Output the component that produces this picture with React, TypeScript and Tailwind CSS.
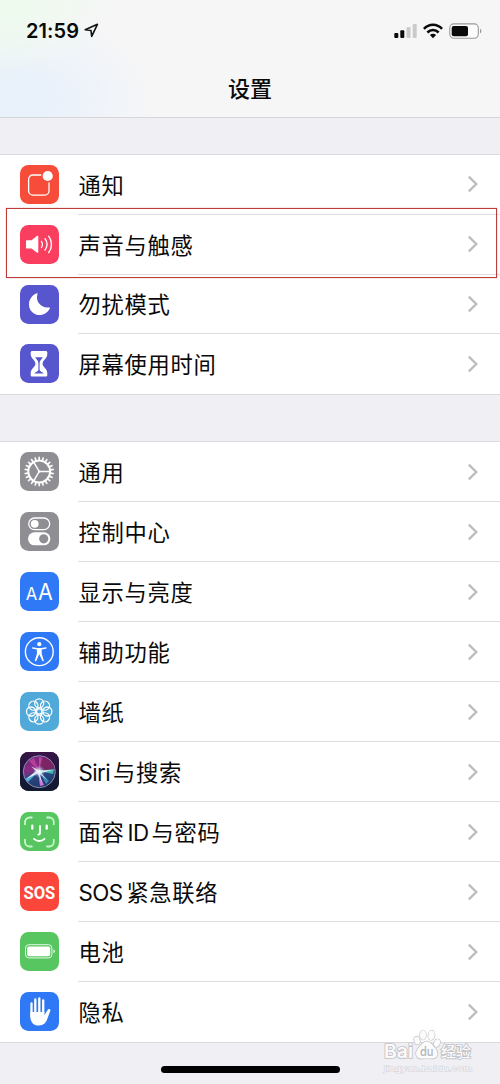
import React from 'react';

interface SettingItem {
    icon: React.ReactNode;
    bg: string;
    // Latin and CJK parts are kept apart because they use different tracking
    label: { text: string; className: string }[];
}

const CJK = 'tracking-[0.7px]';

const NotificationIcon = () => (
    <g fill="none" stroke="#fff" strokeWidth="1.3" strokeLinecap="round">
        <path d="M20.8 10H13a4.4 4.4 0 0 0-4.4 4.4v11.4a4.4 4.4 0 0 0 4.4 4.4h11.6a4.4 4.4 0 0 0 4.4-4.4V18" />
        <circle cx="27.7" cy="11" r="5.1" fill="#fff" stroke="none" />
    </g>
);

const SoundIcon = () => (
    <g fill="none" stroke="#fff" strokeWidth="1.4" strokeLinecap="round">
        <path d="M7 15.2h4.6l5.2-4.1c.8-.6 1.5-.2 1.5.7v15.1c0 .9-.7 1.3-1.5.7l-5.2-4.2H7c-.7 0-1-.4-1-1v-6.2c0-.6.3-1 1-1z" fill="#fff" stroke="none" />
        <path d="M21.4 16.3a5.5 5.5 0 0 1 0 6.2" strokeWidth="1.2" />
        <path d="M25 13.7a9.6 9.6 0 0 1 0 11.4" />
        <path d="M28.7 11.2a13.6 13.6 0 0 1 0 16.4" />
    </g>
);

const MoonIcon = () => (
    <path d="M17.6 8.8C14.9 15.7 20.6 23.7 29.4 22.4c.5-.1.8.3.5.8C27.7 27.6 24 30 19.7 30 13.7 30 9 25.3 9 19.4c0-4.8 3-9.2 7.8-11.1.6-.2 1 .0.8.5z" fill="#fff" />
);

const HourglassIcon = () => (
    <g>
        <path d="M12.3 7h13.4c1 0 1.6.6 1.6 1.5v1.6c0 4.7-4.7 6.3-4.7 9.6s4.7 4.9 4.7 9.6v1.6c0 1-.6 1.600-1.6 1.6H12.3c-1 0-1.6-.6-1.6-1.6v-1.6c0-4.7 4.7-6.3 4.7-9.600s-4.7-4.9-4.7-9.6V8.500c0-.9.6-1.500 1.600-1.500z" fill="#fff" />
        <path d="M15.200 13.300h7.600c-.7 1.800-3.200 3.200-3.200 5.600v6.500c0 2.400 3.200 2.100 4 4.200h-9.200c.8-2.100 4-1.800 4-4.200v-6.500c0-2.400-2.500-3.800-3.200-5.600z" fill="#5856cf" />
    </g>
);

const GearIcon = () => (
    <g fill="none" stroke="#fff" transform="translate(19.2 19.5)">
        {Array.from({ length: 22 }, (_, i) => (
            <path key={i} d="M-.9-11.5L-.6-14.7H.6L.9-11.5z" fill="#fff" strokeWidth=".2" transform={`rotate(${(i * 360) / 22})`} />
        ))}
        <circle r="10.9" strokeWidth="1.9" />
        <circle r="1.3" fill="#fff" stroke="none" />
        <path d="M0 0H10.5M0 0L-5.3-9.2M0 0L-5.3 9.2" strokeWidth="1.500" />
    </g>
);

const ToggleIcon = () => (
    <g>
        <rect x="8.7" y="6" width="21" height="11.6" rx="5.8" fill="none" stroke="#fff" strokeWidth="1.3" />
        <circle cx="14.7" cy="11.8" r="3.9" fill="#fff" />
        <rect x="8" y="20.3" width="22.4" height="13" rx="6.5" fill="#fff" />
        <circle cx="23.7" cy="26.8" r="4.6" fill="#8e8e93" />
    </g>
);

const TextSizeIcon = () => (
    <g fill="#fff" fontFamily="Inter, sans-serif" fontWeight="400">
        <text x="5.700" y="27.800" fontSize="17.500" textLength="11.500" lengthAdjust="spacingAndGlyphs">A</text>
        <text x="18" y="27.800" fontSize="22.500" textLength="14.800" lengthAdjust="spacingAndGlyphs">A</text>
    </g>
);

const AccessibilityIcon = () => (
    <g>
        <circle cx="19.3" cy="19.7" r="13.9" fill="none" stroke="#fff" strokeWidth="1.4" />
        <circle cx="19.3" cy="12.2" r="2.1" fill="#fff" />
        <path d="M12.800 15.300l4.300.7h4.400l4.300-.7c1-.1 1.200 1.200.2 1.400l-4.300.9v4.100l2 6.600c.3 1-1 1.400-1.400.5l-3-6.500-3 6.500c-.4.9-1.700.5-1.400-.5l2-6.600v-4.100l-4.300-.9c-1-.2-.8-1.500.2-1.400z" fill="#fff" />
    </g>
);

const WallpaperIcon = () => (
    <g fill="none" stroke="#fff" strokeWidth="1.3" transform="translate(19.2 19.5)">
        {Array.from({ length: 8 }, (_, i) => (
            <circle key={i} cx="0" cy="-8.2" r="4.5" transform={`rotate(${i * 45})`} />
        ))}
        <circle r="2.7" />
    </g>
);

const SiriIcon = () => (
    <g>
        <defs>
            <linearGradient id="siriBg" x1="0" y1="0" x2="0" y2="1">
                <stop offset="0" stopColor="#3a1548" />
                <stop offset=".5" stopColor="#181737" />
                <stop offset="1" stopColor="#101a30" />
            </linearGradient>
            <linearGradient id="siriOrb" x1=".3" y1="0" x2=".6" y2="1">
                <stop offset="0" stopColor="#7a2380" />
                <stop offset=".4" stopColor="#8a2c83" />
                <stop offset=".62" stopColor="#2b4683" />
                <stop offset="1" stopColor="#1c3a63" />
            </linearGradient>
            <radialGradient id="siriGlow">
                <stop offset="0" stopColor="#fff" />
                <stop offset=".35" stopColor="#e6f4ff" stopOpacity=".7" />
                <stop offset="1" stopColor="#a8dcff" stopOpacity="0" />
            </radialGradient>
        </defs>
        <rect width="39" height="39" fill="url(#siriBg)" />
        <circle cx="19.3" cy="19.7" r="16" fill="url(#siriOrb)" stroke="#8d8bb5" strokeWidth="1" />
        <path d="M20 19l3-14c7 2 11 7 12 12z" fill="#7b245c" opacity=".8" />
        <path d="M19 19L9 9l5-3z" fill="#d84fa8" opacity=".6" />
        <path d="M19 19L19 5l3 1z" fill="#e0609f" opacity=".6" />
        <path d="M19 19L5 27l3 3z" fill="#58b9dc" opacity=".9" />
        <path d="M19 19l15-2-1 5z" fill="#45cbb8" opacity=".85" />
        <path d="M18 20l2 14 4-1z" fill="#c973dc" />
        <path d="M19 19l10 10-3 3z" fill="#3f9bc4" opacity=".8" />
        <path d="M6 27l10-8-5-5 8 4.500 14-.5-12 3 6 7-7-6 2 10-4-10.500z" fill="#fff" opacity=".8" />
        <circle cx="19" cy="19.5" r="6" fill="url(#siriGlow)" />
    </g>
);

const FaceIdIcon = () => (
    <g fill="none" stroke="#fff" strokeWidth="1.8" strokeLinecap="round">
        <g stroke="#c9f5cd">
            <path d="M5 12.3V10a4.5 4.5 0 0 1 4.5-4.5h2.3" />
            <path d="M27 5.5h2.3a4.5 4.5 0 0 1 4.5 4.5v2.3" />
            <path d="M5 27.7V30a4.5 4.5 0 0 0 4.5 4.5h2.3" />
            <path d="M27 34.5h2.3a4.5 4.5 0 0 0 4.5-4.5v-2.3" />
        </g>
        <path d="M12.3 13.7v3M26.7 13.7v3" strokeWidth="2.3" />
        <path d="M20 14v7c0 1.1-.6 1.6-1.8 1.6" />
        <path d="M14 26.8c3 2.9 7.5 2.9 10.5 0" />
    </g>
);

const SosIcon = () => (
    <text x="3.500" y="26.500" fill="#fff" fontFamily="Roboto, sans-serif" fontWeight="700" fontSize="19" textLength="31.800" lengthAdjust="spacingAndGlyphs">SOS</text>
);

const BatteryIcon = () => (
    <g>
        <rect x="5.5" y="12.7" width="26.4" height="13.2" rx="3.4" fill="none" stroke="#e3f9e5" strokeWidth="1" />
        <rect x="7.2" y="14.4" width="23" height="9.8" rx="1.8" fill="#fff" />
        <path d="M33.5 17.3c1.8.6 1.8 3.4 0 4z" fill="#fff" />
    </g>
);

const HandIcon = () => (
    <g fill="none" stroke="#fff" strokeWidth="2.3" strokeLinecap="round">
        <path d="M11.5 11.500v13M15.300 7.500v14M19.300 6.500v14M23.200 8.500v13" />
        <path d="M10.350 20h14v3.200l3.300-5.300c.9-1.500 3.200-.8 2.700.8l-3.200 8.600c-1.400 3.900-4 6.200-8.200 6.200-5.500 0-8.600-3.500-8.600-8.800z" fill="#fff" stroke="none" />
    </g>
);

const cjk = (text: string) => [{ text, className: CJK }];

const firstGroup: SettingItem[] = [
    { icon: <NotificationIcon />, bg: 'bg-[#f74c3a]', label: cjk('通知') },
    { icon: <SoundIcon />, bg: 'bg-[#fa3e60]', label: cjk('声音与触感') },
    { icon: <MoonIcon />, bg: 'bg-[#5856cf]', label: cjk('勿扰模式') },
    { icon: <HourglassIcon />, bg: 'bg-[#5856cf]', label: cjk('屏幕使用时间') },
];

const secondGroup: SettingItem[] = [
    { icon: <GearIcon />, bg: 'bg-[#8e8e93]', label: cjk('通用') },
    { icon: <ToggleIcon />, bg: 'bg-[#8e8e93]', label: cjk('控制中心') },
    { icon: <TextSizeIcon />, bg: 'bg-[#3079f6]', label: cjk('显示与亮度') },
    { icon: <AccessibilityIcon />, bg: 'bg-[#3079f6]', label: cjk('辅助功能') },
    { icon: <WallpaperIcon />, bg: 'bg-[#50a9d8]', label: cjk('墙纸') },
    {
        icon: <SiriIcon />,
        bg: 'bg-[#181737]',
        label: [
            { text: 'Siri', className: 'mr-[3px] tracking-[-0.6px]' },
            { text: '与搜索', className: CJK },
        ],
    },
    {
        icon: <FaceIdIcon />,
        bg: 'bg-[#58c660]',
        label: [
            { text: '面容', className: CJK },
            { text: 'ID', className: 'mx-[3px] tracking-[-0.6px]' },
            { text: '与密码', className: CJK },
        ],
    },
    {
        icon: <SosIcon />,
        bg: 'bg-[#fb463c]',
        label: [
            { text: 'SOS', className: 'mr-[4px] tracking-[-0.6px]' },
            { text: '紧急联络', className: CJK },
        ],
    },
    { icon: <BatteryIcon />, bg: 'bg-[#58c660]', label: cjk('电池') },
    { icon: <HandIcon />, bg: 'bg-[#3079f6]', label: cjk('隐私') },
];

const SettingRow: React.FC<{ item: SettingItem; last: boolean }> = ({ item, last }) => (
    <li className="flex flex-1 items-stretch pl-[19.5px]">
        <div className={`mt-[10px] size-[39px] shrink-0 overflow-hidden rounded-[8.5px] ${item.bg}`}>
            <svg viewBox="0 0 39 39" className="size-full">{item.icon}</svg>
        </div>
        <div className={`ml-[19.5px] flex flex-1 items-center justify-between border-b pr-[21px] ${last ? 'border-transparent' : 'border-[#dedee1]'}`}>
            <span className="flex items-baseline pt-[3px] pl-[0.5px] text-[22.3px] leading-[30px] whitespace-nowrap text-[#0a0a0a]">
                {item.label.map((part) => (
                    <span key={part.text} className={part.className}>{part.text}</span>
                ))}
            </span>
            <svg viewBox="0 0 12 18" className="h-[18px] w-3" fill="none" stroke="#bcbcc0" strokeWidth="2.300">
                <path d="M1.800 1.600L9.300 9l-7.500 7.400" />
            </svg>
        </div>
    </li>
);

const SettingGroup: React.FC<{ items: SettingItem[]; className: string }> = ({ items, className }) => (
    <ul className={`flex flex-col border-y border-[#dbdbdf] bg-white ${className}`}>
        {items.map((item, index) => (
            <SettingRow key={index} item={item} last={index === items.length - 1} />
        ))}
    </ul>
);

const StatusBar = () => (
    <div className="flex h-[61px] items-center justify-between pr-[18px] pl-[26px]">
        <div className="flex items-center gap-[5px]">
            <span className="text-[20px] font-semibold tracking-[0.1px] text-[#0a0a0a]">21:59</span>
            <svg viewBox="0 0 15 15" className="size-[15px]" fill="none" stroke="#111" strokeWidth="1.6" strokeLinejoin="round">
                <path d="M1.200 6.800L13.400 1.300 7.700 13.300 7 7.500z" />
            </svg>
        </div>
        <div className="flex items-center">
            <svg viewBox="0 0 24 16" className="h-4 w-6">
                <rect x=".3" y="10" width="4" height="5" rx="1" fill="#0a0a0a" />
                <rect x="6.3" y="7.3" width="4" height="7.7" rx="1" fill="#0a0a0a" />
                <rect x="12.5" y="4" width="4" height="11" rx="1" fill="#cacaca" />
                <rect x="18.7" y="1" width="4" height="14" rx="1" fill="#cacaca" />
            </svg>
            <svg viewBox="0 0 20 16" className="ml-[5px] h-4 w-5" fill="none" stroke="#0a0a0a" strokeWidth="2.600">
                <path d="M.9 5.900C6 .3 14 .3 19.100 5.900" />
                <path d="M4.400 9.500c3.200-3.300 8-3.300 11.200 0" />
                <path d="M6.900 12a4.400 4.400 0 0 1 6.200 0L10 15.300z" fill="#0a0a0a" stroke="none" />
            </svg>
            <svg viewBox="0 0 33 16" className="ml-[6px] h-4 w-[33px]">
                <rect x=".8" y=".9" width="28.5" height="14.3" rx="4" fill="#fcfcfc" stroke="#999" strokeWidth="1.1" />
                <rect x="2.7" y="2.9" width="16.3" height="10.3" rx="2" fill="#0a0a0a" />
                <path d="M31 5.700c1.800.6 1.800 4 0 4.600z" fill="#999" />
            </svg>
        </div>
    </div>
);

const Watermark = () => (
    <svg viewBox="0 0 100 54" className="absolute top-[1024px] left-[380px] h-[54px] w-[100px]">
        <g fill="#fbfbfc" stroke="#c0c0c4" strokeWidth="1.6" paintOrder="stroke">
            <g strokeWidth="1.3">
                <ellipse cx="37" cy="16.500" rx="2.800" ry="4" transform="rotate(-15 37 16.500)" />
                <ellipse cx="43" cy="11" rx="3" ry="4.700" />
                <ellipse cx="51.500" cy="11.300" rx="3.200" ry="4.700" transform="rotate(10 51.500 11.300)" />
                <ellipse cx="57" cy="19" rx="2.800" ry="4" transform="rotate(20 57 19)" />
                <path d="M47 17.500c4 0 5 3.500 8 6.500 4.500 4.500 2.500 11-3 10.600-3.500-.2-6.500-.2-10 0-6 .4-8-6-3.500-10.600 3-3 4.500-6.500 8.500-6.500z" />
            </g>
            <text x="4" y="34" fontSize="18.500" fontWeight="600" textLength="29" lengthAdjust="spacingAndGlyphs" fontFamily="Inter, sans-serif">Bai</text>
            <text x="61" y="33" fontSize="15" fontWeight="500" textLength="30" fontFamily="'Noto Sans CJK SC', sans-serif">经验</text>
        </g>
        <text x="40" y="32" fontSize="12.500" fontWeight="500" fill="#b4b4b8" textLength="13.500" lengthAdjust="spacingAndGlyphs" fontFamily="Inter, sans-serif">du</text>
        <text x="4" y="46.500" fontSize="8" fill="#fafafc" stroke="#d4d4d8" strokeWidth="1" paintOrder="stroke" textLength="88" lengthAdjust="spacingAndGlyphs" fontFamily="'Liberation Sans', sans-serif">jingyan.baidu.com</text>
    </svg>
);

const App: React.FC = () => {
    return (
        <div className="relative flex h-[1084px] w-[500px] flex-col overflow-hidden bg-[#efeff4] font-[Inter,'Noto_Sans_CJK_SC',sans-serif]">
            <header className="h-[118px] border-b border-[#d6d6da] bg-[#f6f6f7] bg-[radial-gradient(ellipse_110px_80px_at_0_0,#eefaee_25%,transparent),radial-gradient(ellipse_140px_90px_at_10px_100px,#e9f1fb_30%,transparent)]">
                <StatusBar />
                <h1 className="mt-[12px] text-center text-[22px] leading-[32px] font-medium text-[#0a0a0a]">设置</h1>
            </header>

            <SettingGroup items={firstGroup} className="mt-[36px] h-[241px]" />
            <SettingGroup items={secondGroup} className="mt-[46px] h-[602px]" />

            {/* Highlighted row */}
            <div className="absolute top-[208px] left-[6px] h-[70px] w-[491px] border border-[#bd3d3d] shadow-[0_0_1px_#d88080]" />

            <div className="mx-auto mt-[23px] h-[7px] w-[179px] rounded-full bg-black" />
            <Watermark />
        </div>
    );
};

export default App;
